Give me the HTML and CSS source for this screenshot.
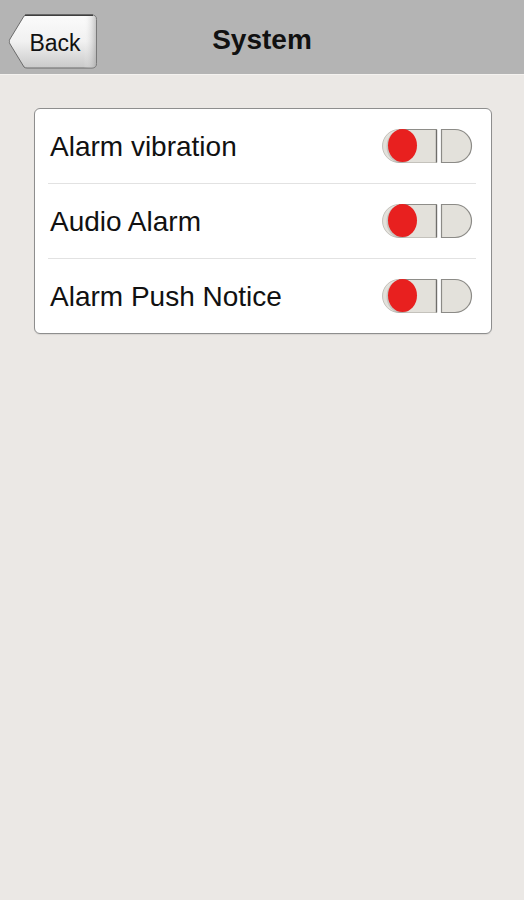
FILE: index.html
```html
<!DOCTYPE html>
<html lang="en">
<head>
<meta charset="utf-8">
<title>System</title>
<link rel="stylesheet" href="styles.css">
</head>
<body>
<header class="navbar">
  <div class="nav-left">
    <button class="back-btn" type="button">
      <svg class="back-shape" width="90" height="55" viewBox="0 0 90 55" aria-hidden="true">
        <defs>
          <linearGradient id="backGrad" x1="0" y1="0" x2="0" y2="1">
            <stop offset="0" stop-color="#fbfbfb"/>
            <stop offset="0.5" stop-color="#f1f1f1"/>
            <stop offset="1" stop-color="#c9c9c9"/>
          </linearGradient>
          <linearGradient id="backSide" x1="0" y1="0" x2="1" y2="0">
            <stop offset="0" stop-color="#ffffff" stop-opacity="0"/>
            <stop offset="0.85" stop-color="#ffffff" stop-opacity="0"/>
            <stop offset="1" stop-color="#9a9a9a" stop-opacity="0.6"/>
          </linearGradient>
        </defs>
        <path d="M1.5,27.5 Q1,26.5 2,25 L16,2 Q17,1 19,1 H84 Q88.5,1 88.5,5.5 V49.5 Q88.5,54 84,54 H19 Q17,54 16,53 L2,30 Q1,28.5 1.5,27.5 Z" fill="url(#backGrad)" stroke="#6b6b6b" stroke-width="1"/>
        <path d="M1.5,27.5 Q1,26.5 2,25 L16,2 Q17,1 19,1 H84 Q88.5,1 88.5,5.5 V49.5 Q88.5,54 84,54 H19 Q17,54 16,53 L2,30 Q1,28.5 1.5,27.5 Z" fill="url(#backSide)"/>
        <path d="M17,1.2 H85" stroke="#3f3f3f" stroke-width="1.6" fill="none"/>
      </svg>
      <span class="back-label">Back</span>
    </button>
  </div>
  <h1 class="nav-title">System</h1>
  <div class="nav-right"></div>
</header>

<main class="content">
  <section class="card">
    <div class="row">
      <span class="row-label">Alarm vibration</span>
      <svg class="toggle" width="92" height="36" viewBox="0 0 92 36" aria-hidden="true">
        <path d="M18,1.5 H55.5 V34.5 H18 A16.5,16.5 0 0 1 18,1.5 Z" fill="#e3e1db" stroke="#c4c2bc" stroke-width="1"/>
        <path d="M18,1.5 H55.5" stroke="#8e8d89" stroke-width="1.2"/>
        <line x1="55.5" y1="1.5" x2="55.5" y2="34.5" stroke="#6f6e6b" stroke-width="1.4"/>
        <path d="M60.5,1.5 H74 A16.5,16.5 0 0 1 74,34.5 H60.5 Z" fill="#e3e1db" stroke="#8c8b87" stroke-width="1.2"/>
        <ellipse cx="20" cy="18.5" rx="14.5" ry="16.5" fill="#000" opacity="0.12"/>
        <ellipse cx="21.5" cy="17.5" rx="14.5" ry="16.5" fill="#e8201f"/>
      </svg>
    </div>
    <div class="sep"></div>
    <div class="row">
      <span class="row-label">Audio Alarm</span>
      <svg class="toggle" width="92" height="36" viewBox="0 0 92 36" aria-hidden="true">
        <path d="M18,1.5 H55.5 V34.5 H18 A16.5,16.5 0 0 1 18,1.5 Z" fill="#e3e1db" stroke="#c4c2bc" stroke-width="1"/>
        <path d="M18,1.5 H55.5" stroke="#8e8d89" stroke-width="1.2"/>
        <line x1="55.5" y1="1.5" x2="55.5" y2="34.5" stroke="#6f6e6b" stroke-width="1.4"/>
        <path d="M60.5,1.5 H74 A16.5,16.5 0 0 1 74,34.5 H60.5 Z" fill="#e3e1db" stroke="#8c8b87" stroke-width="1.2"/>
        <ellipse cx="20" cy="18.5" rx="14.5" ry="16.5" fill="#000" opacity="0.12"/>
        <ellipse cx="21.5" cy="17.5" rx="14.5" ry="16.5" fill="#e8201f"/>
      </svg>
    </div>
    <div class="sep"></div>
    <div class="row">
      <span class="row-label">Alarm Push Notice</span>
      <svg class="toggle" width="92" height="36" viewBox="0 0 92 36" aria-hidden="true">
        <path d="M18,1.5 H55.5 V34.5 H18 A16.5,16.5 0 0 1 18,1.5 Z" fill="#e3e1db" stroke="#c4c2bc" stroke-width="1"/>
        <path d="M18,1.5 H55.5" stroke="#8e8d89" stroke-width="1.2"/>
        <line x1="55.5" y1="1.5" x2="55.5" y2="34.5" stroke="#6f6e6b" stroke-width="1.4"/>
        <path d="M60.5,1.5 H74 A16.5,16.5 0 0 1 74,34.5 H60.5 Z" fill="#e3e1db" stroke="#8c8b87" stroke-width="1.2"/>
        <ellipse cx="20" cy="18.5" rx="14.5" ry="16.5" fill="#000" opacity="0.12"/>
        <ellipse cx="21.5" cy="17.5" rx="14.5" ry="16.5" fill="#e8201f"/>
      </svg>
    </div>
  </section>
</main>
</body>
</html>
```

FILE: styles.css
```css
* {
  box-sizing: border-box;
}

html, body {
  margin: 0;
  padding: 0;
}

body {
  width: 524px;
  min-height: 900px;
  background: #ebe8e5;
  font-family: "Liberation Sans", Arial, Helvetica, sans-serif;
  color: #111;
}

.navbar {
  height: 75px;
  background: #b4b4b4;
  border-bottom: 1px solid #f4f2ef;
  display: grid;
  grid-template-columns: 1fr auto 1fr;
  align-items: center;
}

.nav-left {
  display: flex;
  align-items: center;
  padding-left: 8px;
  padding-top: 14px;
  align-self: start;
}

.back-btn {
  position: relative;
  width: 90px;
  height: 55px;
  padding: 0;
  margin: 0;
  border: 0;
  background: transparent;
  display: flex;
  align-items: center;
  justify-content: center;
}

.back-shape {
  position: absolute;
  left: 0;
  top: 0;
  display: block;
}

.back-label {
  position: relative;
  font-family: "Liberation Sans", Arial, sans-serif;
  font-size: 23px;
  color: #111;
  padding-left: 4px;
  padding-top: 3px;
}

.nav-title {
  margin: 0;
  font-size: 28px;
  font-weight: bold;
  color: #111;
  padding-top: 5px;
}

.content {
  padding: 33px 32px 0 34px;
}

.card {
  background: #ffffff;
  border: 1px solid #8e8e8e;
  border-radius: 6px;
  box-shadow: 0 1px 1px rgba(0, 0, 0, 0.08);
}

.row {
  height: 74px;
  display: flex;
  align-items: center;
  justify-content: space-between;
  padding: 0 18px 0 15px;
}

.row-label {
  font-size: 28px;
  color: #111;
  padding-top: 2px;
}

.toggle {
  display: block;
}

.sep {
  height: 1px;
  background: #e2e2e2;
  margin: 0 15px 0 13px;
}
```
